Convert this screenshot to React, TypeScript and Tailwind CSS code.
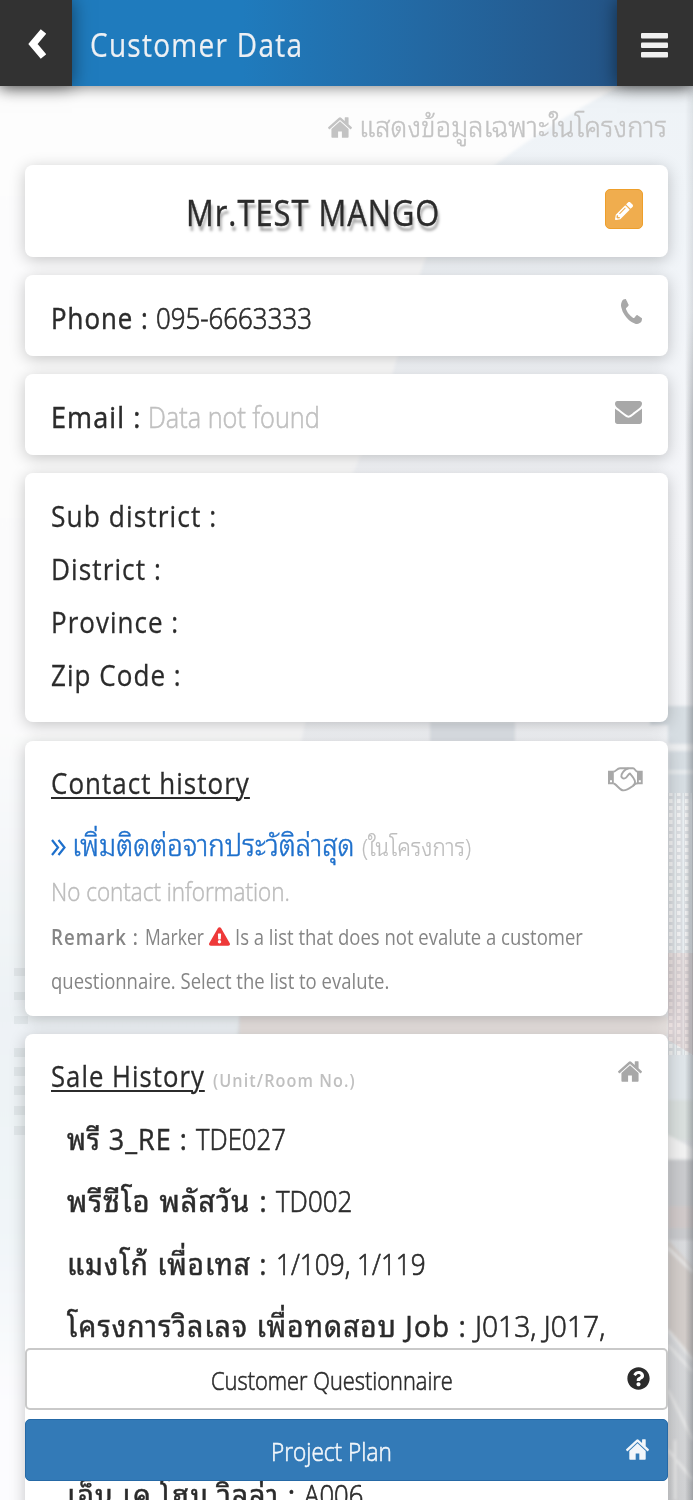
import { useLayoutEffect, useRef, useState, type ReactNode } from "react";
import { FaExclamationTriangle, FaPencilAlt, FaQuestionCircle } from "react-icons/fa";

/** Condenses a run of text horizontally so that it takes up exactly `width` pixels. */
function Fit({ width, className = "", children }: { width: number; className?: string; children: ReactNode }) {
  const inner = useRef<HTMLSpanElement>(null);
  const [scale, setScale] = useState(1);
  useLayoutEffect(() => {
    if (inner.current) setScale(width / inner.current.offsetWidth);
  }, [width]);
  return (
    <span className={`inline-block shrink-0 whitespace-nowrap leading-none ${className}`} style={{ width }}>
      <span ref={inner} className="inline-block origin-left" style={{ transform: `scaleX(${scale})` }}>
        {children}
      </span>
    </span>
  );
}

function Home({ className }: { className: string }) {
  return (
    <svg viewBox="89 240 1614 1310" preserveAspectRatio="none" className={`shrink-0 ${className}`} fill="currentColor">
      <path d="M1472 992v480q0 26-19 45t-45 19h-384v-384h-256v384h-384q-26 0-45-19t-19-45v-480q0-1 .5-3t.5-3l575-474 575 474q1 2 1 6zm223-69l-62 74q-8 9-21 11h-3q-13 0-21-7l-692-577-692 577q-12 8-24 7-13-2-21-11l-62-74q-8-10-7-23.5t11-21.5l719-599q32-26 76-26t76 26l244 204v-195q0-14 9-23t23-9h192q14 0 23 9t9 23v408l219 182q10 8 11 21.5t-7 23.5z" />
    </svg>
  );
}

function Phone({ className }: { className: string }) {
  return (
    <svg viewBox="192 128 1408 1408" preserveAspectRatio="none" className={`shrink-0 ${className}`} fill="currentColor">
      <path d="M1600 1240q0 27-10 70.5t-21 68.5q-21 50-122 106-94 51-186 51-27 0-53-3.5t-57.5-12.5-47-14.5-55.5-20.5-49-18q-98-35-175-83-127-79-264-216t-216-264q-48-77-83-175-3-9-18-49t-20.500-55.500-14.500-47-12.500-57.500-3.500-53q0-92 51-186 56-101 106-122 25-11 68.500-21t70.500-10q14 0 21 3 18 6 53 76 11 19 30 54t35 63.500 31 53.500q3 4 17.500 25t21.500 35.500 7 28.500q0 20-28.500 50t-62 55-62 53-28.500 46q0 9 5 22.500t8.500 20.500 14 24 11.500 19q76 137 174 235t235 174q2 1 19 11.500t24 14 20.500 8.500 22.500 5q18 0 46-28.500t53-62 55-62 50-28.500q14 0 28.500 7t35.500 21.500 25 17.500q25 15 53.500 31t63.500 35 54 30q70 35 76 53 3 7 3 21z" />
    </svg>
  );
}

function Envelope({ className }: { className: string }) {
  return (
    <svg viewBox="0 256 1792 1408" preserveAspectRatio="none" className={`shrink-0 ${className}`} fill="currentColor">
      <path d="M1792 710v794q0 66-47 113t-113 47h-1472q-66 0-113-47t-47-113v-794q44 49 101 87 362 246 497 345 57 42 92.5 65.5t94.5 48 110 24.5h2q51 0 110-24.5t94.5-48 92.5-65.5q170-123 498-345 57-39 100-87zm0-294q0 79-49 151t-122 123q-376 261-468 325-10 7-42.5 31t-54 38.5-52 32.5-57.5 27-50 9h-2q-23 0-50-9t-57.5-27-52-32.5-54-38.5-42.5-31q-91-64-262-182.5t-205-142.5q-62-42-117-115.5t-55-136.5q0-78 41.5-130t118.5-52h1472q65 0 112.5 47t47.5 113z" />
    </svg>
  );
}

function Handshake({ className }: { className: string }) {
  return (
    <svg viewBox="0 0 35 25" className={`shrink-0 ${className}`} fill="none" stroke="currentColor" strokeWidth="1.900" strokeLinejoin="round">
      <path fill="currentColor" stroke="none" fillRule="evenodd" d="M0 3.700H5.800V17.300H0ZM2 13.200V15.200H4V13.200ZM29 3.700H34.700V17.300H29ZM30.800 13.200V15.200H32.800V13.200Z" />
      <path d="M5.500 4.800C8 4.600 9 1.300 12 1.300H25C27 1.300 27.500 4.800 29.500 4.800" />
      <path d="M5.500 16.500C8 16.500 11 22.500 14.500 23.300C18.500 24.200 22 21 25.500 18.500C26.500 17 27 16.300 29.500 16.300" />
      <path d="M20.500 1.500C17 2 15 4.500 13.600 7.500C12.500 10.500 15 12.300 17.500 11C19.300 10 19.800 7.300 22 6.500C24 9.500 27.500 12.500 27 15.500C26.800 17 26 18 25 18.800" />
    </svg>
  );
}

function Backdrop() {
  return (
    <svg className="absolute inset-0 h-[1500px] w-[693px]" viewBox="0 0 693 1500">
      <defs>
        <linearGradient id="sky" x1="0" y1="0" x2="0" y2="1">
          <stop offset="0" stopColor="#edf2f6" />
          <stop offset="0.14" stopColor="#f0f4f8" />
          <stop offset="0.35" stopColor="#f5f6f9" />
          <stop offset="0.55" stopColor="#eff1f4" />
          <stop offset="0.75" stopColor="#dddfe2" />
          <stop offset="1" stopColor="#d0d1d3" />
        </linearGradient>
        <linearGradient id="mist" x1="0" y1="0" x2="0" y2="1">
          <stop offset="0" stopColor="#fdfdfd" />
          <stop offset="0.45" stopColor="#fbfbfc" />
          <stop offset="0.65" stopColor="#edf2f5" />
          <stop offset="0.8" stopColor="#f0f5f8" />
          <stop offset="0.92" stopColor="#fcfcfe" />
        </linearGradient>
        <linearGradient id="edge">
          <stop offset="0" stopColor="#555a60" stopOpacity="0" />
          <stop offset="1" stopColor="#555a60" stopOpacity="0.4" />
        </linearGradient>
        <linearGradient id="edgeTop" x1="0" y1="0" x2="0" y2="1">
          <stop offset="0" stopColor="#fff" stopOpacity="0.25" />
          <stop offset="0.16" stopColor="#fff" stopOpacity="0.4" />
          <stop offset="0.24" stopColor="#fff" />
          <stop offset="1" stopColor="#fff" />
        </linearGradient>
        <mask id="edgeMask">
          <rect x="680" y="86" width="13" height="1414" fill="url(#edgeTop)" />
        </mask>
        <pattern id="tower" x="668" width="8" height="7" patternUnits="userSpaceOnUse">
          <rect width="8" height="7" fill="#d6dadd" />
          <rect x="1" y="1" width="3.500" height="4" fill="#f2f2f3" />
          <rect x="6.500" width="1.500" height="7" fill="#e9f0f3" />
        </pattern>
        <filter id="soft"><feGaussianBlur stdDeviation="1.800" /></filter>
        <filter id="hint"><feGaussianBlur stdDeviation="0.500" /></filter>
      </defs>
      <rect width="693" height="1500" fill="url(#sky)" />
      <path d="M-20 66H640L620 86Q520 140 465 190Q425 235 405 330L385 400L350 480L300 750L240 1010L180 1520H-20Z" fill="url(#mist)" filter="url(#soft)" />
      <g filter="url(#soft)">
        <path d="M240 1016H668V1036H240Z" fill="#e6e0de" />
        <path d="M430 722H515V742H430Z" fill="#dde1e6" />
        <path d="M650 706H700V800H668V725H650Z" fill="#d6dde2" />
        <path d="M668 744H700V751H668Z" fill="#eef0f2" />
        <path d="M668 770H700V774H668Z" fill="#e8ecee" />
        <path d="M668 1055H700V1100H668Z" fill="#dfe5e9" />
        <path d="M668 1100H700V1140H668Z" fill="#d9dfdd" />
        <path d="M668 1160H700V1240H668Z" fill="#c9cacd" />
        <path d="M664 1133L693 1148V1159H664Z" fill="#f1f1f1" />
        <path d="M668 1206H700V1228H668Z" fill="#d0c9c9" />
        <path d="M668 1240L700 1275V1370L668 1330Z" fill="#d2ccc9" />
        <path d="M668 1248L693 1272M668 1330L693 1360M668 1345L693 1372M668 1390L693 1440M668 1450L693 1480M675 1440V1500" stroke="#e9e9e9" strokeWidth="2.500" />
      </g>
      <g filter="url(#hint)">
        <rect x="668" y="793" width="25" height="262" fill="url(#tower)" opacity="0.8" />
        <path d="M668 953H693V1055L668 1040Z" fill="#d5aaa3" opacity="0.22" />
        <g fill="#d9dfe3" opacity="0.600">
          <rect x="14" y="968" width="14" height="8" /><rect x="14" y="992" width="14" height="8" />
          <rect x="14" y="1016" width="14" height="8" /><rect x="14" y="1048" width="14" height="9" />
          <rect x="14" y="1067" width="14" height="9" /><rect x="14" y="1086" width="14" height="9" />
          <rect x="14" y="1106" width="14" height="9" /><rect x="14" y="1126" width="14" height="9" />
        </g>
      </g>
      <rect x="685" y="86" width="8" height="1414" fill="url(#edge)" mask="url(#edgeMask)" />
    </svg>
  );
}

const card = "relative w-[643px] shrink-0 rounded-[8px] bg-white pl-[26px] pr-[26px] shadow-[0_3px_16px_rgba(0,0,0,0.22)]";
const row = "flex items-baseline";
const label = "text-[30px] tracking-[1.2px] [-webkit-text-stroke:0.5px_currentColor]";
const heading = "text-[30px] leading-none tracking-[1.2px] [-webkit-text-stroke:0.3px_currentColor]";
const underline = "underline decoration-2 underline-offset-[3px]";
const value = "text-[30px] font-light [-webkit-text-stroke:0.7px_currentColor]";

const sales = [
  { project: "พรี 3_RE :", labelWidth: 121, units: "TDE027", unitsWidth: 90 },
  { project: "พรีซีโอ พลัสวัน :", labelWidth: 201, units: "TD002", unitsWidth: 76 },
  { project: "แมงโก้ เพื่อเทส :", labelWidth: 201, units: "1/109, 1/119", unitsWidth: 150 },
  { project: "โครงการวิลเลจ เพื่อทดสอบ Job :", labelWidth: 400, units: "J013, J017,", unitsWidth: 130 },
];

const address = [
  { name: "Sub district :", width: 166 },
  { name: "District :", width: 111 },
  { name: "Province :", width: 128 },
  { name: "Zip Code :", width: 131 },
];

export default function App() {
  return (
    <div className="relative h-[1500px] w-[693px] overflow-hidden bg-white font-['Open_Sans','Noto_Sans_Thai_Looped','Noto_Looped_Thai',Loma,Waree,Garuda,'Noto_Serif_Thai','Noto_Sans_Thai',sans-serif] text-[#2b2b2b]">
      <Backdrop />
      <header className="relative flex h-[86px] bg-linear-to-r from-[#1f7bbd] from-35% to-[#245486] to-90% shadow-[0_1px_14px_rgba(0,0,0,0.5)]">
        <button className="flex h-[86px] w-[72px] items-center justify-center bg-[#323232] pl-px pt-[2px] shadow-[0_0_18px_rgba(0,0,0,0.5)]">
          <svg viewBox="0 0 18 30" className="h-[30px] w-[18px]" fill="none" stroke="#fff" strokeWidth="7.200">
            <path d="M15.500 2.500L5 15L15.500 27.500" />
          </svg>
        </button>
        <h1 className="flex flex-1 items-baseline pl-[18px] pt-[28px] text-[33px] tracking-[1.5px] text-[#edf0f4] [-webkit-text-stroke:0.2px_currentColor]">
          <Fit width={213}>Customer Data</Fit>
        </h1>
        <button className="flex h-[86px] w-[76px] justify-center bg-[#323232] pr-px pt-[33px] shadow-[0_0_18px_rgba(0,0,0,0.5)]">
          <svg viewBox="0 0 27 25" className="h-[25px] w-[27px]" fill="#f0f0f0">
            <rect width="27" height="5.500" rx="1" /><rect y="9.500" width="27" height="5.500" rx="1" /><rect y="19" width="27" height="5.500" rx="1" />
          </svg>
        </button>
      </header>

      <main className="relative flex flex-col gap-[18px] pl-[25px]">
        <div className="-mb-[18px] flex h-[79px] items-start gap-[7px] pl-[303px] pt-[25px] text-[#c3c3c3]">
          <Home className="mt-[6px] h-[21px] w-[24px]" />
          <Fit width={308} className="text-[29px] font-light [-webkit-text-stroke:0.4px_currentColor]">แสดงข้อมูลเฉพาะในโครงการ</Fit>
        </div>

        <section className={`${card} flex h-[92px] items-start justify-between`}>
          <h2 className="flex pl-[135px] pt-[30px] text-[36px] tracking-[1.2px] [-webkit-text-stroke:0.4px_currentColor] [text-shadow:2px_5px_3px_rgba(0,0,0,0.35)]">
            <Fit width={254}>Mr.TEST MANGO</Fit>
          </h2>
          <button className="-mr-px mt-[24px] flex h-[40px] w-[38px] items-center justify-center rounded-[5px] border border-[#ee9f2b] bg-[#f0ad4e] pr-px pt-[3px] text-[18px] text-white">
            <FaPencilAlt />
          </button>
        </section>

        <section className={`${card} flex h-[81px] items-start justify-between`}>
          <div className={`${row} gap-[7px] pt-[28px]`}>
            <Fit width={98} className={label}>Phone :</Fit>
            <Fit width={156} className={value}>095-6663333</Fit>
          </div>
          <Phone className="mt-[24px] h-[25px] w-[21px] text-[#a8a8a8]" />
        </section>

        <section className={`${card} flex h-[81px] items-start justify-between`}>
          <div className={`${row} gap-[7px] pt-[28px]`}>
            <Fit width={90} className={label}>Email :</Fit>
            <Fit width={172} className="text-[30px] font-light text-[#c0c0c0] [-webkit-text-stroke:0.6px_currentColor]">Data not found</Fit>
          </div>
          <Envelope className="mt-[27px] h-[23px] w-[27px] text-[#a8a8a8]" />
        </section>

        <section className={`${card} flex h-[249px] flex-col gap-[23px] pt-[28px]`}>
          {address.map((a) => (
            <div key={a.name} className="flex h-[30px] items-baseline">
              <Fit width={a.width} className="text-[30px] tracking-[1.2px] [-webkit-text-stroke:0.3px_currentColor]">{a.name}</Fit>
            </div>
          ))}
        </section>

        <section className={`${card} mt-px flex h-[275px] flex-col`}>
          <div className="flex h-[86px] items-start justify-between pt-[27px]">
            <h3 className={heading}>
              <Fit width={199}><span className={underline}>Contact history</span></Fit>
            </h3>
            <Handshake className="-mr-px -mt-[1px] h-[25px] w-[35px] text-[#a8a8a8]" />
          </div>
          <div className={`${row} h-[49px] pt-[3px] text-[#1e70cc]`}>
            <svg viewBox="0 0 15 17" className="mr-[6px] h-[17px] w-[15px] shrink-0" fill="none" stroke="currentColor" strokeWidth="2.200">
              <path d="M1 1L7 8.500L1 16M7.500 1L13.500 8.500L7.500 16" />
            </svg>
            <Fit width={283} className="mr-[7px] text-[30px] font-light [-webkit-text-stroke:0.5px_currentColor]">เพิ่มติดต่อจากประวัติล่าสุด</Fit>
            <Fit width={109} className="text-[24px] font-light text-[#bdbdbd] [-webkit-text-stroke:0.2px_currentColor]">(ในโครงการ)</Fit>
          </div>
          <div className={`${row} h-[45px] pt-[3px]`}>
            <Fit width={239} className="text-[25px] font-light text-[#bcbcbc] [-webkit-text-stroke:0.5px_currentColor]">No contact information.</Fit>
          </div>
          <div className={`${row} h-[44px] pt-[3px] text-[22px] text-[#858585]`}>
            <Fit width={88} className="mr-[6px] font-semibold tracking-[1.2px]">Remark :</Fit>
            <Fit width={59} className="mr-[5px]">Marker</Fit>
            <FaExclamationTriangle className="mr-[5px] size-[21px] shrink-0 translate-y-[2px] text-[#ee3939]" />
            <Fit width={348}>Is a list that does not evalute a customer</Fit>
          </div>
          <div className={`${row} pt-[4px] text-[22px] text-[#858585]`}>
            <Fit width={338}>questionnaire. Select the list to evalute.</Fit>
          </div>
        </section>

        <section className={`${card} flex h-[600px] flex-col`}>
          <div className="flex h-[90px] items-start justify-between pt-[27px]">
            <div className={`${row} gap-[8px]`}>
              <h3 className={heading}>
                <Fit width={154}><span className={underline}>Sale History</span></Fit>
              </h3>
              <Fit width={143} className="text-[18px] font-semibold tracking-[1.2px] text-[#c0c0c0]">(Unit/Room No.)</Fit>
            </div>
            <Home className="h-[21px] w-[24px] text-[#a8a8a8]" />
          </div>
          {sales.map((s) => (
            <div key={s.project} className={`${row} h-[62.250px] gap-[8px] pl-[16px]`}>
              <Fit width={s.labelWidth} className={label}>{s.project}</Fit>
              <Fit width={s.unitsWidth} className={value}>{s.units}</Fit>
            </div>
          ))}
          <div className={`${row} mt-[107px] gap-[8px] pl-[16px]`}>
            <Fit width={229} className={label}>เอ็น เค โฮม วิลล่า :</Fit>
            <Fit width={59} className={value}>A006</Fit>
          </div>
        </section>
      </main>

      <div className="absolute bottom-[19px] left-[25px] flex w-[643px] flex-col gap-[9px] bg-white">
        <button className="flex h-[62px] items-start justify-between rounded-[5px] border-2 border-[#c9c9c9] bg-white pl-[184px] pr-[16px] pt-[17px]">
          <Fit width={242} className="text-[26px] font-light [-webkit-text-stroke:0.6px_currentColor]">Customer Questionnaire</Fit>
          <FaQuestionCircle className="size-[23px] text-[#2b2b2b]" />
        </button>
        <button className="flex h-[62px] items-start justify-between rounded-[5px] border border-[#2569a6] bg-[#337ab7] pl-[245px] pr-[18px] pt-[18px] text-[#f2f6fa]">
          <Fit width={121} className="text-[26px] font-light [-webkit-text-stroke:0.6px_currentColor]">Project Plan</Fit>
          <Home className="mt-px h-[21px] w-[23px]" />
        </button>
      </div>
    </div>
  );
}
